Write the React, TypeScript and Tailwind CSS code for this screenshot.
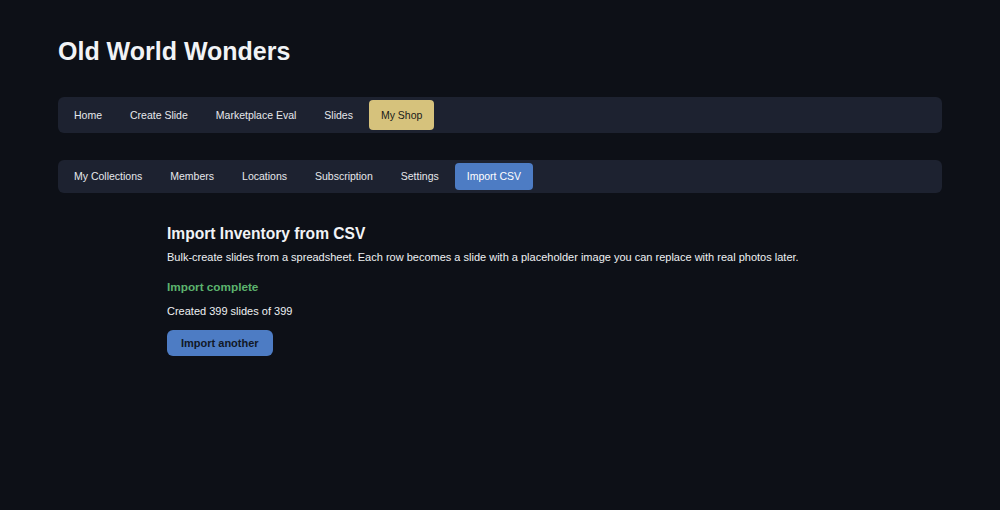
import React from 'react';

const mainTabs = ['Home', 'Create Slide', 'Marketplace Eval', 'Slides', 'My Shop'];
const shopTabs = ['My Collections', 'Members', 'Locations', 'Subscription', 'Settings', 'Import CSV'];

const App: React.FC = () => {
  return (
    <div className="min-h-[510px] bg-[#0d1017] text-[#e6e8ec] px-[58px] pt-[36px] font-['Liberation_Sans',Arial,sans-serif]">
      <h1 className="text-[25px] leading-[31px] font-bold text-[#f1f3f6]">Old World Wonders</h1>

      {/* main navigation */}
      <nav className="mt-[30px] bg-[#1d2230] rounded-md px-1 py-[3px] flex gap-1">
        {mainTabs.map((t) => (
          <button
            key={t}
            className={
              t === 'My Shop'
                ? 'px-3 pt-px h-[30px] rounded text-[10.5px] bg-[#d6c27c] text-[#1a1a1a]'
                : 'px-3 pt-px h-[30px] rounded text-[10.5px] text-[#e6e8ec]'
            }
          >
            {t}
          </button>
        ))}
      </nav>

      {/* shop sub navigation */}
      <nav className="mt-[27px] bg-[#1d2230] rounded-md px-1 py-[3px] flex gap-1">
        {shopTabs.map((t) => (
          <button
            key={t}
            className={
              t === 'Import CSV'
                ? 'px-3 h-[27px] rounded text-[10.5px] bg-[#4d7cc4] text-white'
                : 'px-3 h-[27px] rounded text-[10.5px] text-[#e6e8ec]'
            }
          >
            {t}
          </button>
        ))}
      </nav>

      <section className="pl-[109px] pt-[31px]">
        <h2 className="text-[15.6px] leading-[20px] font-bold text-[#f1f3f6]">Import Inventory from CSV</h2>
        <p className="mt-[6px] text-[11px] leading-[14px] text-[#eef0f3]">
          Bulk-create slides from a spreadsheet. Each row becomes a slide with a placeholder image you can replace with real photos later.
        </p>
        <p className="mt-[15px] text-[11.75px] leading-[15px] font-bold text-[#5cb36e]">Import complete</p>
        <p className="mt-[10px] text-[11px] leading-[14px] text-[#eef0f3]">Created 399 slides of 399</p>
        <button className="mt-[12px] h-[26px] px-[14px] rounded-md bg-[#4d7cc4] text-[11px] font-bold text-[#111827]">
          Import another
        </button>
      </section>
    </div>
  );
};

export default App;
